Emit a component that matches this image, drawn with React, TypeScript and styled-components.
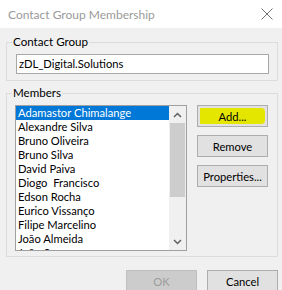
import styled, { createGlobalStyle } from "styled-components";

const members = [
  "Adamastor Chimalange",
  "Alexandre Silva",
  "Bruno Oliveira",
  "Bruno Silva",
  "David Paiva",
  "Diogo  Francisco",
  "Edson Rocha",
  "Eurico Vissanço",
  "Filipe Marcelino",
  "João Almeida",
  "João Sousa",
];

const GlobalStyle = createGlobalStyle`
  html, body {
    margin: 0;
    padding: 0;
    background: #f0f0f0;
  }
  * {
    box-sizing: border-box;
  }
`;

const Window = styled.div`
  width: 282px;
  height: 290px;
  overflow: hidden;
  background: #f0f0f0;
  font-family: Lato, "Noto Sans", sans-serif;
  font-size: 11.2px;
  color: #000;
  display: flex;
  flex-direction: column;
`;

const TitleBar = styled.div`
  height: 28px;
  flex: none;
  background: #fff;
  display: flex;
  align-items: center;
  justify-content: space-between;
  padding: 0 7px 0 8px;
  color: #9a9a9a;
  font-size: 12px;
`;

const Close = styled.div`
  width: 16px;
  height: 16px;
  display: flex;
  align-items: center;
  justify-content: center;
`;

const Body = styled.div`
  flex: 1;
  display: flex;
  flex-direction: column;
  padding: 6px 4px 0 6px;
  gap: 4px;
`;

const Group = styled.fieldset<{ $pad: string }>`
  margin: 0;
  border: 1px solid #dcdcdc;
  padding: ${({ $pad }) => $pad};
  min-width: 0;
`;

const Legend = styled.legend<{ $shift: number }>`
  padding: 0 1px;
  margin-left: ${({ $shift }) => $shift}px;
  line-height: 16px;
  font-size: 11.6px;
`;

const TextBox = styled.div`
  height: 20px;
  border: 1px solid #a8a8a8;
  background: #fff;
  padding: 0 2px;
  line-height: 18px;
  white-space: nowrap;
`;

const MembersRow = styled.div`
  display: flex;
  gap: 10px;
  align-items: flex-start;
`;

const ListBox = styled.div`
  width: 172px;
  height: 146px;
  border: 1px solid #a0a0a0;
  background: #fff;
  display: flex;
  overflow: hidden;
`;

const Items = styled.div`
  flex: 1;
  overflow: hidden;
`;

const Item = styled.div<{ $selected?: boolean }>`
  height: 14px;
  line-height: 14px;
  padding-left: 2px;
  white-space: pre;
  background: ${({ $selected }) => ($selected ? "#0078d7" : "transparent")};
  color: ${({ $selected }) => ($selected ? "#fff" : "#000")};
`;

const ScrollBar = styled.div`
  width: 17px;
  flex: none;
  background: #f0f0f0;
  display: flex;
  flex-direction: column;
  align-items: center;
`;

const Arrow = styled.div`
  height: 17px;
  width: 17px;
  flex: none;
  display: flex;
  align-items: center;
  justify-content: center;
`;

const Thumb = styled.div`
  width: 15px;
  height: 74px;
  background: #cdcdcd;
`;

const Track = styled.div`
  flex: 1;
`;

const Buttons = styled.div`
  display: flex;
  flex-direction: column;
  gap: 8px;
`;

const Button = styled.div<{ $disabled?: boolean }>`
  width: 71px;
  height: 22px;
  border: 1px solid ${({ $disabled }) => ($disabled ? "#bfbfbf" : "#adadad")};
  background: ${({ $disabled }) => ($disabled ? "#cccccc" : "#e1e1e1")};
  color: ${({ $disabled }) => ($disabled ? "#9d9d9d" : "#000")};
  display: flex;
  align-items: center;
  justify-content: center;
  padding: 2px;
`;

const Marker = styled.span<{ $marked?: boolean }>`
  flex: 1;
  align-self: stretch;
  display: flex;
  align-items: center;
  justify-content: center;
  background: ${({ $marked }) => ($marked ? "#e5e600" : "transparent")};
  border-radius: ${({ $marked }) => ($marked ? "1px 4px 4px 1px" : "0")};
`;

const Footer = styled.div`
  display: flex;
  justify-content: flex-end;
  gap: 10px;
  padding: 9px 0 0 0;
`;

const Chevron = ({ up }: { up?: boolean }) => (
  <svg width="9" height="6" viewBox="0 0 9 6">
    <path
      d={up ? "M1 5 L4.5 1.5 L8 5" : "M1 1 L4.5 4.5 L8 1"}
      fill="none"
      stroke="#606060"
      strokeWidth="1.5"
    />
  </svg>
);

export default function App() {
  return (
    <Window>
      <GlobalStyle />
      <TitleBar>
        <span>Contact Group Membership</span>
        <Close>
          <svg width="12" height="12" viewBox="0 0 12 12">
            <path d="M0.5 0.5 L11.5 11.5 M11.5 0.5 L0.5 11.5" stroke="#707070" strokeWidth="1" />
          </svg>
        </Close>
      </TitleBar>
      <Body>
        <Group $pad="4px 8px 6px 9px">
          <Legend $shift={-4}>Contact Group</Legend>
          <TextBox>zDL_Digital.Solutions</TextBox>
        </Group>
        <Group $pad="4px 9px 5px 8px">
          <Legend $shift={-3}>Members</Legend>
          <MembersRow>
            <ListBox>
              <Items>
                {members.map((m, i) => (
                  <Item key={m} $selected={i === 0}>
                    {m}
                  </Item>
                ))}
              </Items>
              <ScrollBar>
                <Arrow>
                  <Chevron up />
                </Arrow>
                <Thumb />
                <Track />
                <Arrow>
                  <Chevron />
                </Arrow>
              </ScrollBar>
            </ListBox>
            <Buttons>
              <Button>
                <Marker $marked>Add...</Marker>
              </Button>
              <Button>
                <Marker>Remove</Marker>
              </Button>
              <Button>
                <Marker>Properties...</Marker>
              </Button>
            </Buttons>
          </MembersRow>
        </Group>
        <Footer>
          <Button $disabled>OK</Button>
          <Button>Cancel</Button>
        </Footer>
      </Body>
    </Window>
  );
}
